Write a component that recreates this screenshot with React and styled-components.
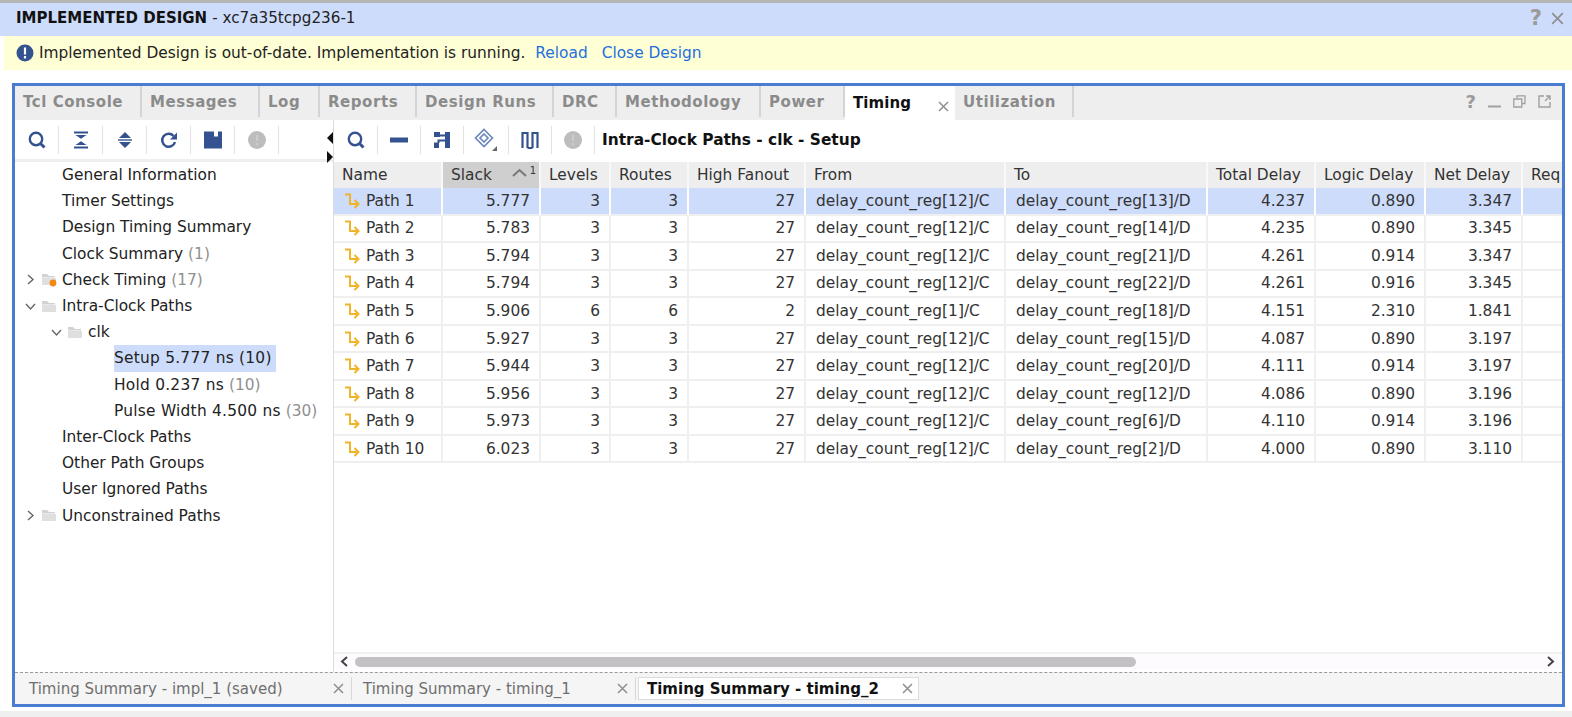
import React from 'react'
import styled, { createGlobalStyle } from 'styled-components'

const Global = createGlobalStyle`
  html, body { margin: 0; padding: 0; background: #fff; overflow: hidden; }
  body { font-family: "DejaVu Sans", Verdana, sans-serif; font-size: 15.4px; color: #222; }
`

const Page = styled.div`
  width: 1572px;
  height: 717px;
  display: flex;
  flex-direction: column;
  overflow: hidden;
`
const TitleBar = styled.div`
  height: 30px;
  flex: none;
  display: flex;
  align-items: center;
  padding: 0 8px 3px 16px;
  background: #cddcfb;
  border-top: 3px solid #b5b5b5;
  color: #222;
`
const TitleStrong = styled.b`
  font-size: 15px;
  font-weight: 600;
  color: #111;
`
const TitleRest = styled.span`
  font-size: 15.2px;
  margin-left: 5px;
  flex: 1;
`
const WindowIcon = styled.span`
  display: flex;
  font-size: ${p => p.$size || 18}px;
  font-weight: 700;
  color: #9a9a9a;
  margin-left: 9px;
  line-height: 1;
`
const Banner = styled.div`
  height: 34px;
  flex: none;
  margin-left: 4px;
  padding-left: 12px;
  display: flex;
  align-items: center;
  background: #ffffd6;
`
const BannerText = styled.span`
  margin-left: 5px;
`
const BannerLink = styled.a`
  margin-left: ${p => p.$gap}px;
  color: #1f6fe0;
`
const Panel = styled.div`
  flex: none;
  height: 618px;
  margin: 13px 7px 0 12px;
  border: 3px solid #4a7dd0;
  display: flex;
  flex-direction: column;
  background: #fff;
`
const FootStrip = styled.div`
  flex: 1;
  margin-top: 4px;
  background: #efefef;
`
const TabBar = styled.div`
  height: 34px;
  flex: none;
  display: flex;
  background: #eeeeee;
`
const Tab = styled.div`
  width: ${p => p.$w}px;
  box-sizing: border-box;
  display: flex;
  align-items: center;
  justify-content: space-between;
  padding: 0 6px 0 8px;
  font-weight: 700;
  font-size: 15px;
  letter-spacing: ${p => (p.$active ? 0.1 : 0.55)}px;
  white-space: nowrap;
  color: ${p => (p.$active ? '#111' : '#8b8b8b')};
  background: ${p => (p.$active ? '#fff' : 'transparent')};
  border-right: ${p => (p.$active ? 'none' : '2px solid #d4d4d4')};
  margin-bottom: ${p => (p.$active ? 0 : 3)}px;
`
const TabClose = styled.span`
  display: flex;
  margin-top: 6px;
  color: #8b8b8b;
`
const PanelTools = styled.div`
  margin-left: auto;
  display: flex;
  align-items: center;
  gap: 12px;
  padding: 0 11px 3px 0;
  color: #a0a0a0;
`
const Body = styled.div`
  flex: 1;
  min-height: 0;
  display: flex;
`
const LeftPane = styled.div`
  width: 318px;
  flex: none;
  display: flex;
  flex-direction: column;
  border-right: 1px solid #dcdcdc;
`
const RightPane = styled.div`
  flex: 1;
  min-width: 0;
  display: flex;
  flex-direction: column;
`
const Toolbar = styled.div`
  height: 38px;
  padding-top: 1px;
  flex: none;
  display: flex;
  align-items: center;
  position: relative;
  border-bottom: ${p => (p.$rule ? '3px solid #eee' : 'none')};
  margin-bottom: ${p => (p.$rule ? 0 : 3)}px;
`
const ToolButton = styled.div`
  width: ${p => p.$w}px;
  height: 28px;
  box-sizing: border-box;
  flex: none;
  display: flex;
  align-items: center;
  justify-content: center;
  border-right: 1px solid #e2e2e2;
`
const Splitter = styled.div`
  position: absolute;
  right: 0;
  top: 12px;
  display: flex;
  flex-direction: column;
  align-items: flex-end;
  gap: 7px;
`
const Triangle = styled.i`
  width: 0;
  height: 0;
  border-top: 6px solid transparent;
  border-bottom: 6px solid transparent;
  border-${p => (p.$left ? 'right' : 'left')}: 6px solid #111;
`
const ToolTitle = styled.b`
  margin-left: 7px;
  font-size: 15.4px;
  font-weight: 700;
  color: #111;
  white-space: nowrap;
`
const Tree = styled.div`
  display: flex;
  flex-direction: column;
`
const TreeRow = styled.div`
  height: 26.2px;
  display: flex;
  align-items: center;
  padding-left: ${p => p.$indent}px;
  white-space: nowrap;
`
const Chevron = styled.span`
  width: 17px;
  margin-left: -1px;
  flex: none;
  display: flex;
`
const Folder = styled.span`
  width: 20px;
  margin-left: -1px;
  margin-right: 1px;
  flex: none;
  display: flex;
`
const TreeLabel = styled.span`
  height: 100%;
  display: flex;
  align-items: center;
  letter-spacing: ${p => (p.$wide ? 0.25 : 0)}px;
  padding-right: ${p => (p.$selected ? 4 : 0)}px;
  background: ${p => (p.$selected ? '#cddcfb' : 'transparent')};
`
const Count = styled.span`
  color: #909090;
  margin-left: 5px;
`
const TableArea = styled.div`
  flex: 1;
  min-height: 0;
  overflow: hidden;
`
const Grid = styled.div`
  display: grid;
  grid-template-columns: 109px 98px 70px 78px 117px 200px 202px 108px 110px 97px 60px;
  grid-template-rows: 26px;
  grid-auto-rows: 27.55px;
`
const HeadCell = styled.div`
  box-sizing: border-box;
  display: flex;
  align-items: center;
  padding-left: 8px;
  background: ${p => (p.$sorted ? '#cfcfcf' : '#eeeeee')};
  border-right: 2px solid #f8f8f8;
  color: #333;
  white-space: nowrap;
  position: relative;
`
const SortMark = styled.span`
  position: absolute;
  right: 3px;
  top: 3px;
  display: flex;
  align-items: flex-start;
  gap: 3px;
  font-size: 10px;
  color: #333;
`
const Cell = styled.div`
  box-sizing: border-box;
  display: flex;
  align-items: center;
  justify-content: ${p => (p.$num ? 'flex-end' : 'flex-start')};
  padding: 0 ${p => (p.$num ? 9 : 3)}px 0 ${p => (p.$num ? 0 : 10)}px;
  background: ${p => (p.$selected ? '#cddcfb' : '#fff')};
  border-right: 2px solid ${p => (p.$selected ? '#fff' : '#efefef')};
  border-bottom: 2px solid #efefef;
  white-space: nowrap;
  overflow: hidden;
  color: #333;
`
const PathLabel = styled.span`
  margin-left: 6px;
`
const ScrollRow = styled.div`
  height: 15px;
  flex: none;
  display: flex;
  align-items: center;
  margin-bottom: 3px;
  border-top: 2px solid #f0f0f0;
  background: #fdfbfd;
`
const ScrollEnd = styled.span`
  width: 21px;
  flex: none;
  display: flex;
  justify-content: center;
`
const ScrollThumb = styled.div`
  width: 781px;
  height: 10px;
  border-radius: 5px;
  background: #c3c1c4;
`
const ScrollRight = styled(ScrollEnd)`
  margin-left: auto;
  width: 24px;
`
const BottomBar = styled.div`
  height: 31px;
  flex: none;
  display: flex;
  align-items: center;
  padding-left: 14px;
  background: #f5f5f5;
  border-top: 1px dashed #9a9a9a;
  font-size: 15px;
`
const BottomTab = styled.div`
  width: ${p => p.$w}px;
  height: 23px;
  box-sizing: border-box;
  flex: none;
  display: flex;
  align-items: center;
  justify-content: space-between;
  white-space: nowrap;
  color: ${p => (p.$active ? '#111' : '#6f6f6f')};
  font-weight: ${p => (p.$active ? 600 : 400)};
  background: ${p => (p.$active ? '#fff' : 'transparent')};
  border: ${p => (p.$active ? '1px solid #dcdcdc' : '0 solid transparent')};
  border-right: ${p => (p.$active ? '1px solid #dcdcdc' : '1px solid #d8d8d8')};
  padding: ${p => (p.$active ? '0 5px 0 8px' : '0 7px 0 0')};
  margin-left: ${p => p.$gap}px;
`

const blue = '#34528f'

const Svg = ({ size = 20, children, ...rest }) => (
  <svg width={size} height={size} viewBox="0 0 20 20" fill="none" {...rest}>{children}</svg>
)
const SearchIcon = () => (
  <Svg><circle cx="9" cy="9" r="6.2" stroke={blue} strokeWidth="2.4" /><path d="M13.500 13.500l4 4" stroke={blue} strokeWidth="3" /></Svg>
)
const CollapseIcon = () => (
  <Svg><path d="M3 2.500h14M3 17.500h14" stroke={blue} strokeWidth="2" /><path d="M4.500 5h11L10 8.800zM4.500 15h11L10 11.200z" fill={blue} /></Svg>
)
const ExpandIcon = () => (
  <Svg><path d="M4 8h12L10 2zM4 12h12l-6 6z" fill={blue} /><path d="M3 10h14" stroke={blue} strokeWidth="1.4" /></Svg>
)
const RefreshIcon = () => (
  <Svg><path d="M16 12a6.500 6.500 0 1 1-1.500-6.200" stroke={blue} strokeWidth="2.5" /><path d="M18 2.500v7h-7z" fill={blue} /></Svg>
)
const SaveIcon = () => (
  <Svg><path d="M1 1.500h10v5h4v-5h4v17H1z" fill={blue} /></Svg>
)
const BusyIcon = () => (
  <Svg><circle cx="10" cy="10" r="9" fill="#bdbdbd" /><path d="M10 5v6M10 13v2" stroke="#cdcdcd" strokeWidth="2" /></Svg>
)
const MinusIcon = () => (
  <Svg><rect x="1" y="7.500" width="18" height="5" fill={blue} /></Svg>
)
const RouteIcon = () => (
  <Svg>
    <path d="M2 2h6v5H2zM13 2h5v16h-5zM2 12.500h5V18H2z" fill={blue} />
    <path d="M8 5.500h5M13 10.500H6.500V13" stroke={blue} strokeWidth="2" />
  </Svg>
)
const DiamondIcon = () => (
  <svg width="24" height="24" viewBox="0 0 24 24" fill="none">
    <path d="M10 1.500L18.500 10 10 18.500 1.500 10z" stroke="#6a86bd" strokeWidth="1.6" />
    <path d="M10 6l4 4-4 4-4-4z" stroke="#6a86bd" strokeWidth="1.6" />
    <path d="M23 18v5h-5z" fill="#666" />
  </svg>
)
const PulseIcon = () => (
  <Svg><path d="M2.500 18V3h5v15M12.500 18V3h5v15M7.500 18h5" stroke={blue} strokeWidth="2.2" /></Svg>
)
const PathIcon = () => (
  <svg width="16" height="16" viewBox="0 0 16 16" fill="none" style={{ flex: 'none' }}>
    <path d="M1 1.500h5V11h7" stroke="#f0b428" strokeWidth="2" />
    <path d="M10.500 7l4 4-4 4" stroke="#f0b428" strokeWidth="2" />
  </svg>
)
const CloseIcon = ({ size = 11 }) => (
  <svg width={size} height={size} viewBox="0 0 11 11"><path d="M1 1l9 9M10 1l-9 9" stroke="#8f8f8f" strokeWidth="1.5" /></svg>
)
const FolderIcon = ({ dot }) => (
  <svg width="16" height="15" viewBox="0 0 16 15">
    <path d="M1 2h5l2 2h6v1.500H1z" fill="#d2d2d2" />
    <path d="M1 6h14v7H1z" fill="#dfdfdf" />
    {dot && <circle cx="12" cy="11" r="3.400" fill="#f28a12" />}
  </svg>
)
const arrowPaths = { down: 'M1 3l4.500 5L10 3', right: 'M3 1l5 4.500L3 10', left: 'M8 1L3 5.500 8 10' }
const Arrow = ({ dir, bold }) => (
  <svg width="11" height="11" viewBox="0 0 11 11" fill="none">
    <path d={arrowPaths[dir]} stroke={bold ? '#444' : '#666'} strokeWidth={bold ? 2 : 1.4} />
  </svg>
)

const mainTabs = [
  ['Tcl Console', 127], ['Messages', 118], ['Log', 60], ['Reports', 97], ['Design Runs', 137],
  ['DRC', 63], ['Methodology', 144], ['Power', 84], ['Timing', 110, true], ['Utilization', 119],
]

const treeRows = [
  { label: 'General Information', indent: 47 },
  { label: 'Timer Settings', indent: 47 },
  { label: 'Design Timing Summary', indent: 47 },
  { label: 'Clock Summary', count: '(1)', indent: 47 },
  { label: 'Check Timing', count: '(17)', indent: 11, arrow: 'right', folder: true, dot: true },
  { label: 'Intra-Clock Paths', indent: 11, arrow: 'down', folder: true },
  { label: 'clk', indent: 37, arrow: 'down', folder: true },
  { label: 'Setup 5.777 ns (10)', indent: 99, selected: true, wide: true },
  { label: 'Hold 0.237 ns', count: '(10)', indent: 99, wide: true },
  { label: 'Pulse Width 4.500 ns', count: '(30)', indent: 99, wide: true },
  { label: 'Inter-Clock Paths', indent: 47 },
  { label: 'Other Path Groups', indent: 47 },
  { label: 'User Ignored Paths', indent: 47 },
  { label: 'Unconstrained Paths', indent: 11, arrow: 'right', folder: true },
]

const columns = ['Name', 'Slack', 'Levels', 'Routes', 'High Fanout', 'From', 'To', 'Total Delay', 'Logic Delay', 'Net Delay', 'Req']

const paths = [
  ['5.777', 3, 3, 27, '[12]/C', '[13]/D', '4.237', '0.890', '3.347'],
  ['5.783', 3, 3, 27, '[12]/C', '[14]/D', '4.235', '0.890', '3.345'],
  ['5.794', 3, 3, 27, '[12]/C', '[21]/D', '4.261', '0.914', '3.347'],
  ['5.794', 3, 3, 27, '[12]/C', '[22]/D', '4.261', '0.916', '3.345'],
  ['5.906', 6, 6, 2, '[1]/C', '[18]/D', '4.151', '2.310', '1.841'],
  ['5.927', 3, 3, 27, '[12]/C', '[15]/D', '4.087', '0.890', '3.197'],
  ['5.944', 3, 3, 27, '[12]/C', '[20]/D', '4.111', '0.914', '3.197'],
  ['5.956', 3, 3, 27, '[12]/C', '[12]/D', '4.086', '0.890', '3.196'],
  ['5.973', 3, 3, 27, '[12]/C', '[6]/D', '4.110', '0.914', '3.196'],
  ['6.023', 3, 3, 27, '[12]/C', '[2]/D', '4.000', '0.890', '3.110'],
]

export default function App() {
  return (
    <Page>
      <Global />
      <TitleBar>
        <TitleStrong>IMPLEMENTED DESIGN</TitleStrong>
        <TitleRest>- xc7a35tcpg236-1</TitleRest>
        <WindowIcon $size={21}>?</WindowIcon>
        <WindowIcon><CloseIcon size={13} /></WindowIcon>
      </TitleBar>
      <Banner>
        <svg width="18" height="18" viewBox="0 0 18 18">
          <circle cx="9" cy="9" r="8.500" fill={blue} />
          <path d="M9 3.500v7M9 12v2.400" stroke="#fff" strokeWidth="2.200" />
        </svg>
        <BannerText>Implemented Design is out-of-date. Implementation is running.</BannerText>
        <BannerLink $gap={10}>Reload</BannerLink>
        <BannerLink $gap={14}>Close Design</BannerLink>
      </Banner>
      <Panel>
        <TabBar>
          {mainTabs.map(([name, w, active]) => (
            <Tab key={name} $w={w} $active={active}>
              {name}
              {active && <TabClose><CloseIcon /></TabClose>}
            </Tab>
          ))}
          <PanelTools>
            <WindowIcon $size={18}>?</WindowIcon>
            <svg width="13" height="13" viewBox="0 0 13 13"><path d="M0 11.500h13" stroke="#a0a0a0" strokeWidth="2" /></svg>
            <svg width="13" height="13" viewBox="0 0 13 13" fill="none"><path d="M4 3V.8h8v7.700H9.500M.8 4h8v8h-8z" stroke="#a0a0a0" strokeWidth="1.300" /></svg>
            <svg width="13" height="13" viewBox="0 0 13 13" fill="none"><path d="M6 1H1v11h11V7M7 6l5-5M8 1h4v4" stroke="#a0a0a0" strokeWidth="1.400" /></svg>
          </PanelTools>
        </TabBar>
        <Body>
          <LeftPane>
            <Toolbar $rule>
              <ToolButton $w={44}><SearchIcon /></ToolButton>
              <ToolButton $w={44}><CollapseIcon /></ToolButton>
              <ToolButton $w={44}><ExpandIcon /></ToolButton>
              <ToolButton $w={44}><RefreshIcon /></ToolButton>
              <ToolButton $w={44}><SaveIcon /></ToolButton>
              <ToolButton $w={44}><BusyIcon /></ToolButton>
              <Splitter>
                <Triangle $left />
                <Triangle />
              </Splitter>
            </Toolbar>
            <Tree>
              {treeRows.map(row => (
                <TreeRow key={row.label} $indent={row.indent}>
                  {row.arrow && <Chevron><Arrow dir={row.arrow} /></Chevron>}
                  {row.folder && <Folder><FolderIcon dot={row.dot} /></Folder>}
                  <TreeLabel $selected={row.selected} $wide={row.wide}>{row.label}</TreeLabel>
                  {row.count && <Count>{row.count}</Count>}
                </TreeRow>
              ))}
            </Tree>
          </LeftPane>
          <RightPane>
            <Toolbar>
              <ToolButton $w={44}><SearchIcon /></ToolButton>
              <ToolButton $w={43}><MinusIcon /></ToolButton>
              <ToolButton $w={43}><RouteIcon /></ToolButton>
              <ToolButton $w={45}><DiamondIcon /></ToolButton>
              <ToolButton $w={43}><PulseIcon /></ToolButton>
              <ToolButton $w={43}><BusyIcon /></ToolButton>
              <ToolTitle>Intra-Clock Paths - clk - Setup</ToolTitle>
            </Toolbar>
            <TableArea>
              <Grid>
                {columns.map(col => (
                  <HeadCell key={col} $sorted={col === 'Slack'}>
                    {col}
                    {col === 'Slack' && (
                      <SortMark>
                        <svg width="15" height="9" viewBox="0 0 15 9" style={{ marginTop: 3 }}><path d="M1 8l6.500-6 6.500 6" stroke="#777" strokeWidth="2" fill="none" /></svg>
                        1
                      </SortMark>
                    )}
                  </HeadCell>
                ))}
                {paths.map((p, i) => {
                  const sel = i === 0
                  return (
                    <React.Fragment key={i}>
                      <Cell $selected={sel}><PathIcon /><PathLabel>Path {i + 1}</PathLabel></Cell>
                      <Cell $num $selected={sel}>{p[0]}</Cell>
                      <Cell $num $selected={sel}>{p[1]}</Cell>
                      <Cell $num $selected={sel}>{p[2]}</Cell>
                      <Cell $num $selected={sel}>{p[3]}</Cell>
                      <Cell $selected={sel}>delay_count_reg{p[4]}</Cell>
                      <Cell $selected={sel}>delay_count_reg{p[5]}</Cell>
                      <Cell $num $selected={sel}>{p[6]}</Cell>
                      <Cell $num $selected={sel}>{p[7]}</Cell>
                      <Cell $num $selected={sel}>{p[8]}</Cell>
                      <Cell $selected={sel} />
                    </React.Fragment>
                  )
                })}
              </Grid>
            </TableArea>
            <ScrollRow>
              <ScrollEnd><Arrow dir="left" bold /></ScrollEnd>
              <ScrollThumb />
              <ScrollRight><Arrow dir="right" bold /></ScrollRight>
            </ScrollRow>
          </RightPane>
        </Body>
        <BottomBar>
          <BottomTab $w={323} $gap={0}>Timing Summary - impl_1 (saved)<CloseIcon /></BottomTab>
          <BottomTab $w={273} $gap={11}>Timing Summary - timing_1<CloseIcon /></BottomTab>
          <BottomTab $w={281} $gap={2} $active>Timing Summary - timing_2<CloseIcon /></BottomTab>
        </BottomBar>
      </Panel>
      <FootStrip />
    </Page>
  )
}
